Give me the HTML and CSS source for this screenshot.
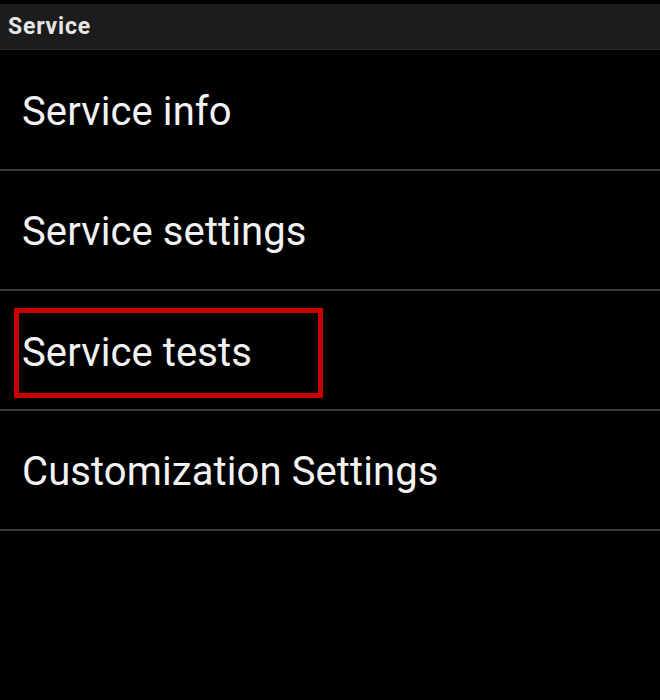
FILE: index.html
```html
<!DOCTYPE html>
<html>
<head>
<meta charset="utf-8">
<link rel="stylesheet" href="styles.css">
</head>
<body>
<div class="screen">
  <div class="header"><span class="title">Service</span></div>
  <div class="list">
    <div class="row"><span class="label">Service info</span></div>
    <div class="row"><span class="label">Service settings</span></div>
    <div class="row"><span class="label highlight">Service tests</span></div>
    <div class="row"><span class="label">Customization Settings</span></div>
  </div>
</div>
</body>
</html>
```
FILE: styles.css
```css
html, body {
  margin: 0;
  padding: 0;
  background: #000;
}
.screen {
  width: 660px;
  height: 700px;
  background: #000;
  font-family: Roboto, "Noto Sans", sans-serif;
  color: #f2f2f2;
}
.header {
  margin-top: 4px;
  height: 45px;
  background: #1c1c1c;
  border-bottom: 1px solid #2a2a2a;
  display: flex;
  align-items: center;
  padding-left: 8px;
}
.title {
  font-size: 23px;
  font-weight: bold;
  letter-spacing: 0.8px;
  color: #e6e6e6;
}
.list {
  display: flex;
  flex-direction: column;
}
.row {
  height: 118px;
  border-bottom: 2px solid #3a3a3a;
  display: flex;
  align-items: center;
  padding-left: 22px;
}
.row:first-child {
  height: 119px;
}
.label {
  font-size: 40px;
  letter-spacing: 0.1px;
  padding-top: 3px;
}
.highlight {
  outline: 5px solid #c80000;
  outline-offset: 0;
  margin-left: -3px;
  margin-top: 6px;
  padding: 16px 66px 17px 3px;
}
```
